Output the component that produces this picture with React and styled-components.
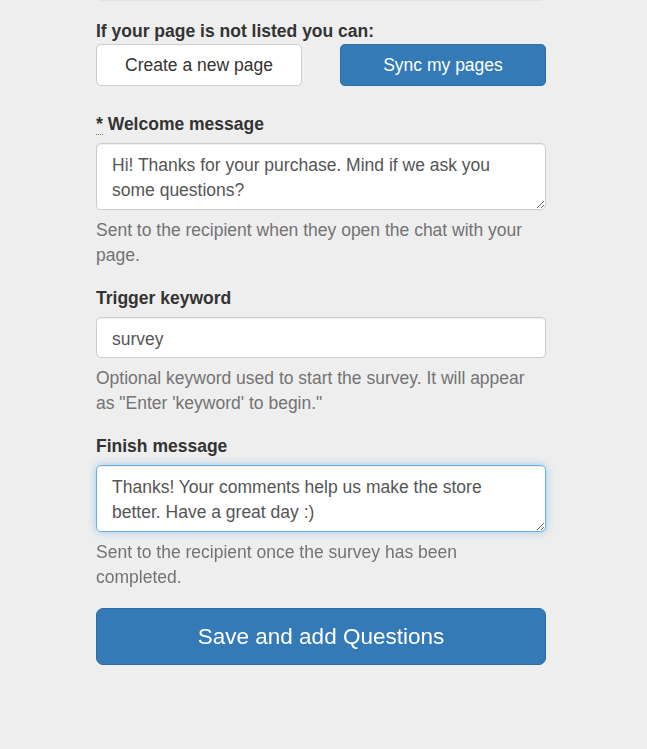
import React, { useEffect, useRef } from 'react'
import styled, { createGlobalStyle, css } from 'styled-components'

const GlobalStyle = createGlobalStyle`
  html, body {
    margin: 0;
    padding: 0;
    background: #eeeeee;
  }
  body {
    font-family: 'Liberation Sans', Arial, sans-serif;
    font-size: 17.5px;
    line-height: 25px;
    color: #333;
  }
  * {
    box-sizing: border-box;
  }
`

const Page = styled.div`
  width: 450px;
  margin-left: 96px;
  padding-bottom: 84px;
`

const Rule = styled.div`
  height: 1px;
  margin: 0 4px;
  background: #e2e2e2;
`

const Group = styled.div`
  margin-bottom: 18px;
  margin-top: ${p => p.$top || 0}px;
`

const Label = styled.label`
  display: block;
  font-weight: 700;
  margin-bottom: ${p => p.$gap ?? 6}px;
`

const Required = styled.abbr`
  text-decoration: none;
  border-bottom: 1px dotted #777;
  cursor: help;
`

const ButtonRow = styled.div`
  display: grid;
  grid-template-columns: 1fr 1fr;
  gap: 38px;
`

const Button = styled.button`
  display: block;
  width: 100%;
  font-family: inherit;
  font-size: 17.5px;
  line-height: 25px;
  padding: 7.5px 14px;
  border-radius: 4.8px;
  border: 1px solid #ccc;
  background: #fff;
  color: #333;
  cursor: pointer;

  ${p => p.$primary && css`
    background: #337ab7;
    border-color: #2e6da4;
    color: #fff;
  `}

  ${p => p.$large && css`
    font-size: 22.5px;
    line-height: 30px;
    padding: 12.5px 19px;
    border-radius: 7px;
  `}
`

const fieldBase = css`
  display: block;
  width: 100%;
  font-family: inherit;
  font-size: 17.5px;
  line-height: 25px;
  color: #555;
  background: #fff;
  border: 1px solid #ccc;
  border-radius: 4.8px;
  padding: 8.5px 15px 5.5px;
  box-shadow: inset 0 1px 1px rgba(0, 0, 0, 0.075);
  outline: none;

  &:focus {
    border-color: #66afe9;
    box-shadow: inset 0 1px 1px rgba(0, 0, 0, 0.075), 0 0 8px rgba(102, 175, 233, 0.6);
  }

  ${p => p.$focused && css`
    border-color: #66afe9;
    box-shadow: inset 0 1px 1px rgba(0, 0, 0, 0.075), 0 0 8px rgba(102, 175, 233, 0.6);
  `}
`

const Input = styled.input`
  ${fieldBase}
  height: 41px;
`

const TextArea = styled.textarea`
  ${fieldBase}
  height: 67px;
  resize: vertical;
  overflow: hidden;
`

const Help = styled.p`
  margin: 8px 0 0;
  padding-right: 4px;
  color: #737373;
`

function App() {
  const finishRef = useRef(null)

  useEffect(() => {
    const el = finishRef.current
    if (el) {
      el.focus()
      const len = el.value.length
      el.setSelectionRange(len, len)
    }
  }, [])

  return (
    <>
      <GlobalStyle />
      <Page>
        <Rule />
        <Group $top={18}>
          <Label $gap={0}>If your page is not listed you can:</Label>
          <ButtonRow>
            <Button type="button">Create a new page</Button>
            <Button type="button" $primary>Sync my pages</Button>
          </ButtonRow>
        </Group>

        <Group $top={26}>
          <Label><Required title="required">*</Required> Welcome message</Label>
          <TextArea defaultValue="Hi! Thanks for your purchase. Mind if we ask you some questions?" />
          <Help>Sent to the recipient when they open the chat with your page.</Help>
        </Group>

        <Group>
          <Label>Trigger keyword</Label>
          <Input type="text" defaultValue="survey" />
          <Help>Optional keyword used to start the survey. It will appear as "Enter 'keyword' to begin."</Help>
        </Group>

        <Group>
          <Label>Finish message</Label>
          <TextArea ref={finishRef} $focused defaultValue="Thanks! Your comments help us make the store better. Have a great day :)" />
          <Help>Sent to the recipient once the survey has been completed.</Help>
        </Group>

        <Button type="button" $primary $large>Save and add Questions</Button>
      </Page>
    </>
  )
}

export default App
